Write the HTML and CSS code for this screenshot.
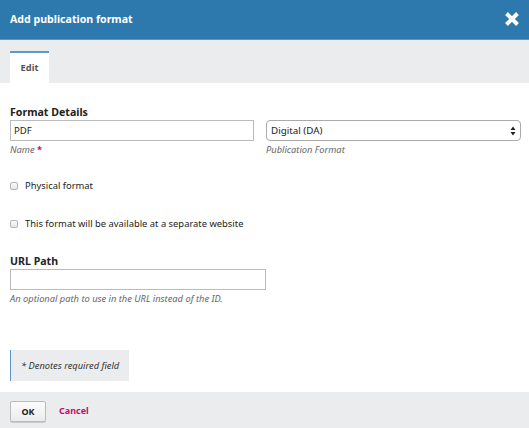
FILE: index.html
```html
<!DOCTYPE html>
<html>
<head>
<meta charset="utf-8">
<link rel="stylesheet" href="styles.css">
</head>
<body>
<div class="modal">
  <div class="header">
    <h1 class="title">Add publication format</h1>
    <span class="close" aria-label="Close">
      <svg width="16" height="16" viewBox="0 0 16 16"><path d="M2.5 2.5 L13.5 13.5 M13.5 2.5 L2.5 13.5" stroke="#fff" stroke-width="4" stroke-linecap="butt"/></svg>
    </span>
  </div>
  <div class="tabs">
    <div class="tab">Edit</div>
  </div>
  <div class="content">
    <div class="section">
      <div class="legend">Format Details</div>
      <div class="row">
        <div class="col">
          <input class="text" type="text" value="PDF">
          <div class="help">Name <span class="req">*</span></div>
        </div>
        <div class="col col-r">
          <div class="select">
            <span>Digital (DA)</span>
            <svg width="6" height="10" viewBox="0 0 6 10"><path d="M3 0.5 L5.5 4 L0.5 4 Z M3 9.5 L5.5 6 L0.5 6 Z" fill="#222"/></svg>
          </div>
          <div class="help">Publication Format</div>
        </div>
      </div>
    </div>
    <label class="check c1"><span class="box"></span>Physical format</label>
    <label class="check c2"><span class="box"></span>This format will be available at a separate website</label>
    <div class="section url">
      <div class="legend">URL Path</div>
      <input class="text url-input" type="text" value="">
      <div class="help">An optional path to use in the URL instead of the ID.</div>
    </div>
    <div class="notice">* Denotes required field</div>
  </div>
  <div class="footer">
    <button class="ok">OK</button>
    <a class="cancel">Cancel</a>
  </div>
</div>
</body>
</html>
```

FILE: styles.css
```css
* { box-sizing: border-box; }
html, body { margin: 0; padding: 0; }
body {
  font-family: "Noto Sans", "Open Sans", sans-serif;
  color: #222;
  background: #fff;
  width: 529px;
  height: 428px;
  overflow: hidden;
}
.modal { display: flex; flex-direction: column; height: 428px; }
.header {
  height: 40px;
  background: #2d79ae;
  border-bottom: 1px solid #5d99c4;
  display: flex;
  align-items: center;
  justify-content: space-between;
  padding: 0 10px 0 10px;
}
.title {
  margin: 0;
  font-size: 10.6px;
  font-weight: 700;
  color: #fff;
  line-height: 20px;
  margin-top: -2px;
}
.close { display: flex; margin-top: -2px; margin-right: -1px; }
.tabs {
  background: #ebeced;
  height: 43px;
  padding: 11px 10px 0;
  display: flex;
}
.tab {
  width: 39px;
  height: 32px;
  background: #fff;
  border-top: 2px solid #5d99c4;
  font-size: 9.3px;
  font-weight: 700;
  color: #555;
  text-align: center;
  line-height: 29px;
}
.content { flex: 1; padding: 0 10px; }
.section { padding-top: 22px; }
.legend {
  font-size: 10.6px;
  font-weight: 700;
  line-height: 15px;
  margin-bottom: 0;
}
.row { display: flex; gap: 12px; }
.col { width: 244px; flex-shrink: 0; }
.col-r { width: 255px; }
.text {
  display: block;
  width: 100%;
  height: 21px;
  border: 1px solid #bbb;
  border-radius: 0;
  padding: 0 3px;
  font-family: inherit;
  font-size: 9.6px;
  color: #222;
  outline: none;
  background: #fff;
}
.select {
  height: 21px;
  border: 1px solid #aaa;
  border-radius: 4px;
  display: flex;
  align-items: center;
  justify-content: space-between;
  padding: 0 4px 0 4px;
  font-size: 9.8px;
  background: #fff;
}
.help {
  font-size: 9.3px;
  font-style: italic;
  color: #666;
  line-height: 14px;
  margin-top: 2px;
}
.req { color: #d00a6c; font-style: normal; font-weight: 700; }
.check {
  display: flex;
  align-items: center;
  font-size: 9.4px;
  line-height: 16px;
}
.c1 { margin-top: 21px; }
.c2 { margin-top: 22px; }
.box {
  width: 8px;
  height: 8px;
  border: 1px solid #b5b5b5;
  border-radius: 2px;
  background: linear-gradient(#fafafa, #e6e6e6);
  margin-right: 7px;
}
.url { padding-top: 22px; }
.url-input { width: 256px; height: 21px; }
.notice {
  margin-top: 44px;
  width: 119px;
  height: 31px;
  background: #ebeced;
  border-left: 1px solid #5d99c4;
  font-size: 9.3px;
  font-style: italic;
  line-height: 31px;
  padding-left: 10px;
  color: #333;
}
.footer {
  height: 36px;
  background: #ebeced;
  display: flex;
  align-items: center;
  padding: 0 10px;
}
.ok {
  width: 36px;
  height: 21px;
  border: 1px solid #bbb;
  border-radius: 2px;
  background: linear-gradient(#fbfbfb, #ececec);
  font-family: inherit;
  font-weight: 700;
  font-size: 9px;
  color: #222;
  padding: 0;
  box-shadow: 0 1px 0 #ccc;
  margin-top: 2px;
}
.cancel {
  margin-left: 13px;
  font-size: 9px;
  font-weight: 700;
  color: #d00a6c;
}
```
